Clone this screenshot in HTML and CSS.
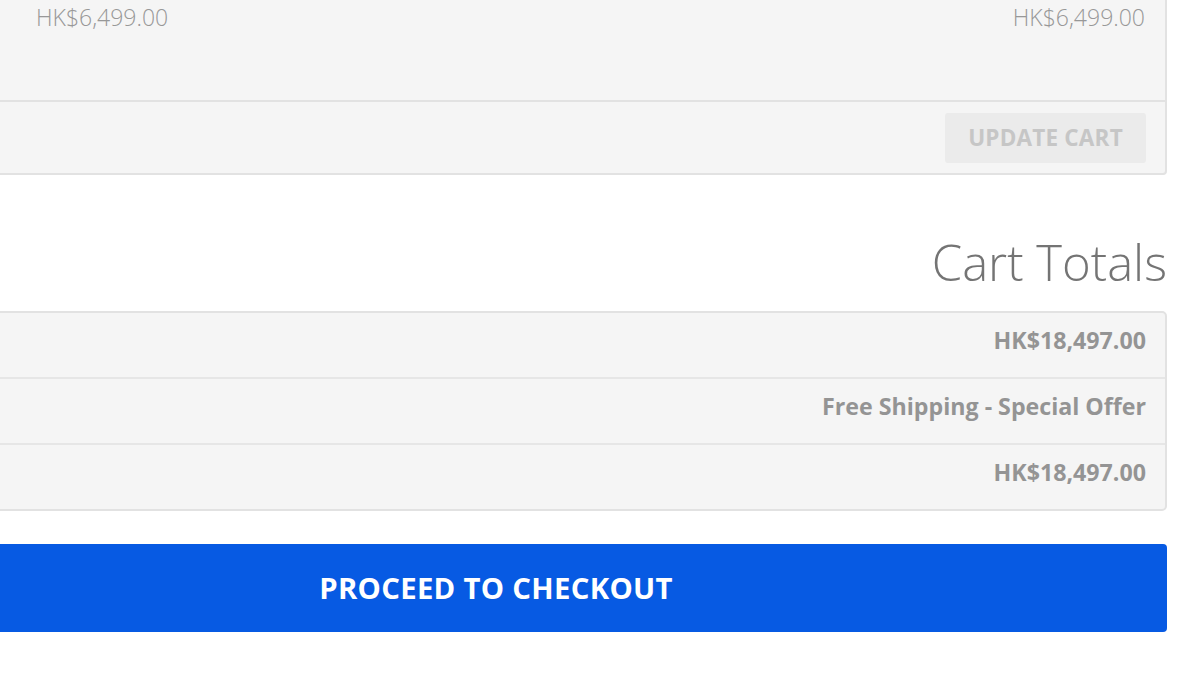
FILE: index.html
```html
<!DOCTYPE html>
<html>
<head>
<meta charset="utf-8">
<link rel="stylesheet" href="styles.css">
</head>
<body>
<div class="page">
  <div class="cart-panel">
    <div class="item-row">
      <div class="cell-price">HK$6,499.00</div>
      <div class="cell-total">HK$6,499.00</div>
    </div>
    <div class="actions-row">
      <button class="update-btn">UPDATE CART</button>
    </div>
  </div>

  <h2 class="totals-title">Cart Totals</h2>

  <div class="totals-panel">
    <div class="totals-row"><span class="label">Subtotal</span><span class="value">HK$18,497.00</span></div>
    <div class="totals-row"><span class="label">Shipping</span><span class="value">Free Shipping - Special Offer</span></div>
    <div class="totals-row"><span class="label">Total</span><span class="value">HK$18,497.00</span></div>
  </div>

  <button class="checkout-btn">PROCEED TO CHECKOUT</button>
</div>
</body>
</html>
```

FILE: styles.css
```css
html, body {
  margin: 0;
  padding: 0;
  background: #ffffff;
  overflow: hidden;
}

body {
  font-family: "Open Sans", "Liberation Sans", sans-serif;
  width: 1200px;
  height: 673px;
}

.page {
  margin-left: -175px;
  width: 1342px;
  margin-top: -40px;
}

.cart-panel {
  background: #f5f5f5;
  border: 2px solid #e2e2e2;
  border-radius: 4px;
}

.item-row {
  display: flex;
  justify-content: space-between;
  padding: 40px 20px 0 209px;
  height: 98px;
  border-bottom: 2px solid #e2e2e2;
}

.cell-price,
.cell-total {
  font-size: 23px;
  font-weight: 300;
  line-height: 30px;
  color: #989898;
}

.actions-row {
  display: flex;
  justify-content: flex-end;
  padding: 11px 19px 10px 20px;
}

.update-btn {
  font-family: "Open Sans", "Liberation Sans", sans-serif;
  font-size: 22.5px;
  font-weight: 700;
  color: #c6c6c6;
  background: #ebebeb;
  border: none;
  border-radius: 3px;
  width: 201px;
  height: 50px;
  padding: 0 0 2px 0;
  letter-spacing: 0.2px;
}

.totals-title {
  margin: 0;
  padding-top: 47px;
  height: 89px;
  text-align: right;
  font-size: 49px;
  font-weight: 300;
  line-height: 80px;
  color: #747474;
}

.totals-panel {
  background: #f5f5f5;
  border: 2px solid #e2e2e2;
  border-radius: 5px;
}

.totals-row {
  display: flex;
  justify-content: space-between;
  align-items: center;
  height: 54px;
  padding: 0 19px 10px 210px;
  border-bottom: 2px solid #e6e6e6;
}

.totals-row:last-child {
  border-bottom: none;
}

.totals-row .label {
  visibility: hidden;
  font-size: 22px;
}

.totals-row .value {
  font-size: 23.2px;
  font-weight: 700;
  color: #949494;
}

.checkout-btn {
  display: block;
  margin-top: 33px;
  width: 1342px;
  height: 88px;
  background: #075ae3;
  border: none;
  border-radius: 4px;
  color: #ffffff;
  font-family: "Open Sans", "Liberation Sans", sans-serif;
  font-size: 29.3px;
  font-weight: 700;
  letter-spacing: 0.3px;
  padding: 0;
}
```
